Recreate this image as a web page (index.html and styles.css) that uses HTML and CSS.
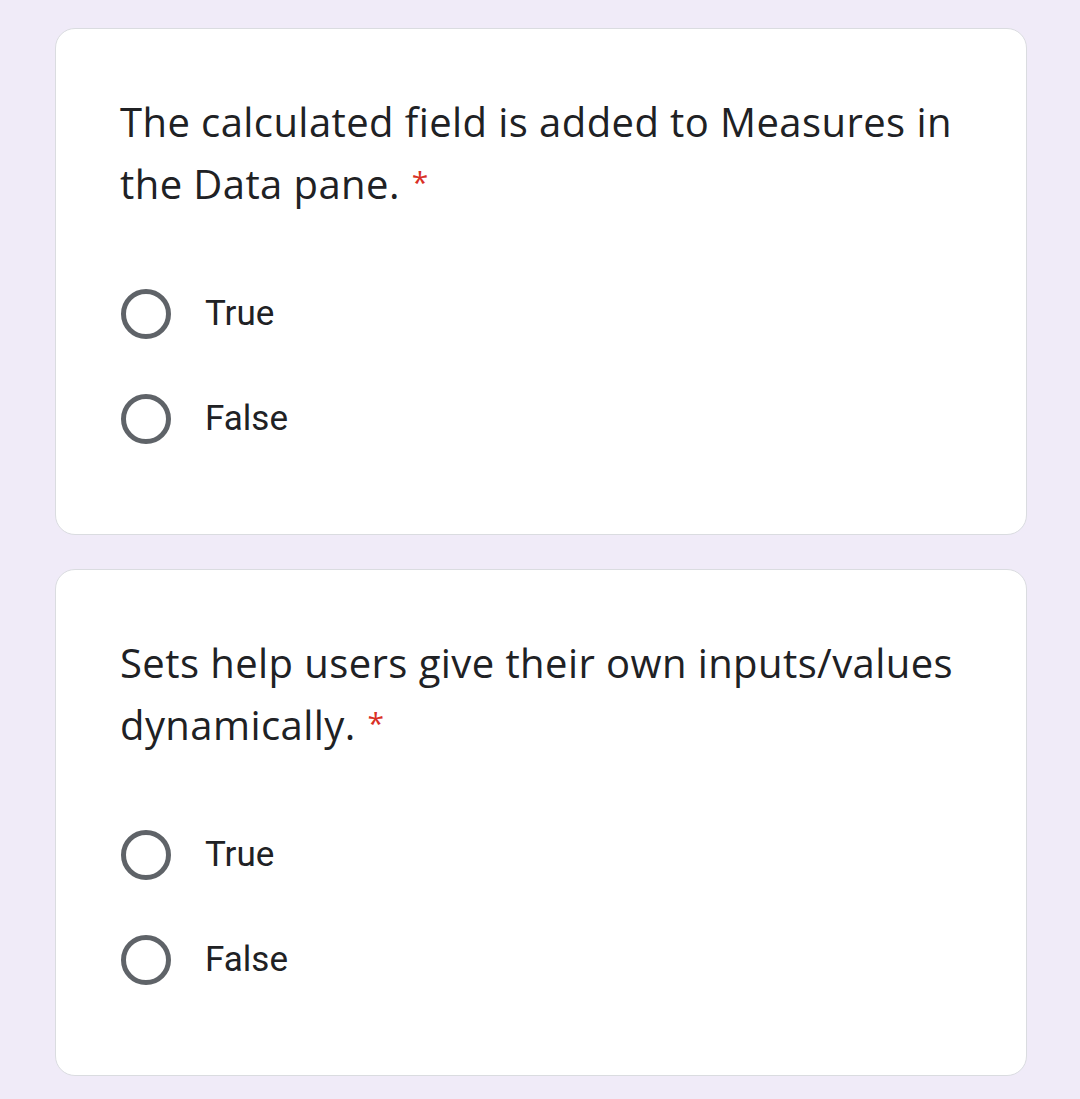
FILE: index.html
```html
<!DOCTYPE html>
<html>
<head>
<meta charset="utf-8">
<link rel="stylesheet" href="styles.css">
</head>
<body>
<div class="page">
  <div class="card">
    <div class="question">The calculated field is added to Measures in the Data pane.<span class="req">*</span></div>
    <div class="options">
      <div class="option"><span class="radio"></span><span class="label">True</span></div>
      <div class="option"><span class="radio"></span><span class="label">False</span></div>
    </div>
  </div>
  <div class="card">
    <div class="question">Sets help users give their own inputs/values dynamically.<span class="req">*</span></div>
    <div class="options">
      <div class="option"><span class="radio"></span><span class="label">True</span></div>
      <div class="option"><span class="radio"></span><span class="label">False</span></div>
    </div>
  </div>
</div>
</body>
</html>
```

FILE: styles.css
```css
html, body {
  margin: 0;
  padding: 0;
  background: #f0ebf8;
}
.page {
  padding: 28px 0 0 55px;
  display: flex;
  flex-direction: column;
  gap: 34px;
}
.card {
  box-sizing: border-box;
  width: 972px;
  height: 507px;
  background: #fff;
  border: 1px solid #dadce0;
  border-radius: 20px;
  padding: 62px 50px 0 64px;
}
.question {
  font-family: "Open Sans", sans-serif;
  font-size: 40px;
  line-height: 62px;
  color: #202124;
  letter-spacing: 0.42px;
}
.req {
  display: inline-block;
  color: #d93025;
  font-size: 30px;
  line-height: 30px;
  margin-left: 12px;
  vertical-align: 6px;
}
.options {
  margin-top: 74px;
  display: flex;
  flex-direction: column;
  gap: 55px;
}
.option {
  display: flex;
  align-items: center;
  height: 50px;
}
.radio {
  box-sizing: border-box;
  width: 50px;
  height: 50px;
  border: 5px solid #5f6368;
  border-radius: 50%;
  margin-left: 1px;
}
.label {
  font-family: Roboto, sans-serif;
  font-size: 35px;
  color: #202124;
  margin-left: 34px;
  position: relative;
  top: -1px;
}
```
